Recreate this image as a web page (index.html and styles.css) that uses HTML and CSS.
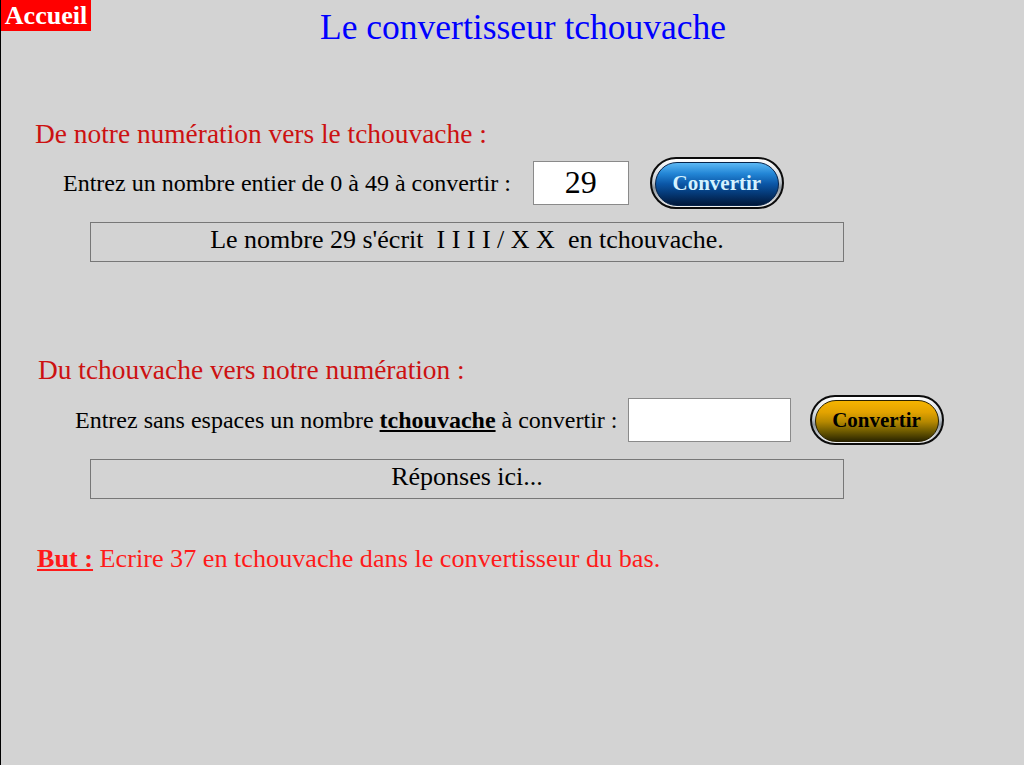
FILE: index.html
```html
<!DOCTYPE html>
<html lang="fr">
<head>
    <meta charset="UTF-8">
    <title>Le convertisseur tchouvache</title>
    <link rel="stylesheet" href="styles.css">
</head>
<body>
    <div class="page">
        <div class="top">
            <a class="home" href="#">Accueil</a>
            <h1 class="title">Le convertisseur tchouvache</h1>
        </div>

        <div class="block block-1">
            <h2 class="block-title">De notre numération vers le tchouvache :</h2>
            <div class="row">
                <span class="label">Entrez un nombre entier de 0 à 49 à convertir :</span>
                <input class="field field-num" type="text" value="29">
                <button class="btn btn-blue"><span class="btn-face">Convertir</span></button>
            </div>
            <div class="result">Le nombre 29 s'écrit&nbsp; I I I I / X X&nbsp; en tchouvache.</div>
        </div>

        <div class="block block-2">
            <h2 class="block-title">Du tchouvache vers notre numération :</h2>
            <div class="row">
                <span class="label">Entrez sans espaces un nombre <b><u>tchouvache</u></b> à convertir :</span>
                <input class="field field-text" type="text" value="">
                <button class="btn btn-gold"><span class="btn-face">Convertir</span></button>
            </div>
            <div class="result">Réponses ici...</div>
        </div>

        <p class="goal"><b><u>But :</u></b> Ecrire 37 en tchouvache dans le convertisseur du bas.</p>
    </div>
</body>
</html>
```

FILE: styles.css
```css
html, body {
    margin: 0;
    padding: 0;
}

body {
    background-color: #d3d3d3;
    font-family: "Liberation Serif", "Times New Roman", serif;
    color: #000;
}

.page {
    min-height: 765px;
    border-left: 1px solid #000;
    box-sizing: border-box;
}

.top {
    display: flex;
    align-items: flex-start;
}

.home {
    display: block;
    width: 90px;
    height: 31px;
    background-color: #ff0000;
    color: #fff;
    font-size: 26px;
    font-weight: bold;
    line-height: 31px;
    text-align: center;
    text-decoration: none;
}

.title {
    margin: 7px 0 0 229px;
    font-size: 35.5px;
    font-weight: normal;
    line-height: 40px;
    color: #0000ff;
}

.block-title {
    margin: 0;
    font-size: 27.4px;
    font-weight: normal;
    line-height: 32px;
    color: #cc1111;
}

.block-1 .block-title {
    margin-top: 71px;
    padding-left: 34px;
}

.block-2 .block-title {
    margin-top: 92px;
    padding-left: 37px;
}

.row {
    display: flex;
    align-items: center;
    height: 53px;
}

.block-1 .row {
    margin-top: 6px;
    padding-left: 62px;
}

.block-2 .row {
    margin-top: 7px;
    padding-left: 74px;
}

.label {
    font-size: 24px;
    line-height: 24px;
}

.field {
    height: 44px;
    box-sizing: border-box;
    border: 1px solid #8a8a8a;
    background: #fff;
    font-family: "Liberation Serif", "Times New Roman", serif;
    text-align: center;
    padding: 0;
}

.field-num {
    width: 96px;
    margin-left: 22px;
    font-size: 32px;
}

.field-text {
    width: 163px;
    margin-left: 10px;
    font-size: 24px;
}

.btn {
    width: 134px;
    height: 52px;
    margin-left: 21px;
    padding: 3px;
    box-sizing: border-box;
    border: 2px solid #0c0c0c;
    border-radius: 26px;
    background: linear-gradient(to bottom, #ffffff 0%, #c9d0d6 45%, #8d969e 60%, #f2f2f2 100%);
    cursor: pointer;
}

.btn-face {
    display: flex;
    align-items: center;
    justify-content: center;
    height: 100%;
    border-radius: 22px;
    font-family: "Liberation Serif", "Times New Roman", serif;
    font-size: 21px;
    font-weight: bold;
}

.btn-blue .btn-face {
    background: linear-gradient(to bottom, #5cb8f4 0%, #2386d6 25%, #0b56a6 50%, #053a78 72%, #01183a 100%);
    border: 1px solid #06234a;
    color: #d4f2ff;
}

.btn-gold {
    margin-left: 19px;
    height: 50px;
}

.btn-gold .btn-face {
    background: linear-gradient(to bottom, #f5b400 0%, #e3a300 28%, #b58800 52%, #6e5a00 76%, #2c2600 100%);
    border: 1px solid #2a2200;
    color: #000;
}

.result {
    width: 754px;
    height: 40px;
    margin-left: 89px;
    box-sizing: border-box;
    border: 1px solid #777;
    font-size: 26px;
    line-height: 34px;
    text-align: center;
}

.block-1 .result {
    margin-top: 13px;
}

.block-2 .result {
    margin-top: 13px;
}

.goal {
    margin: 45px 0 0 36px;
    font-size: 26.2px;
    line-height: 30px;
    color: #ff1a1a;
}
```
